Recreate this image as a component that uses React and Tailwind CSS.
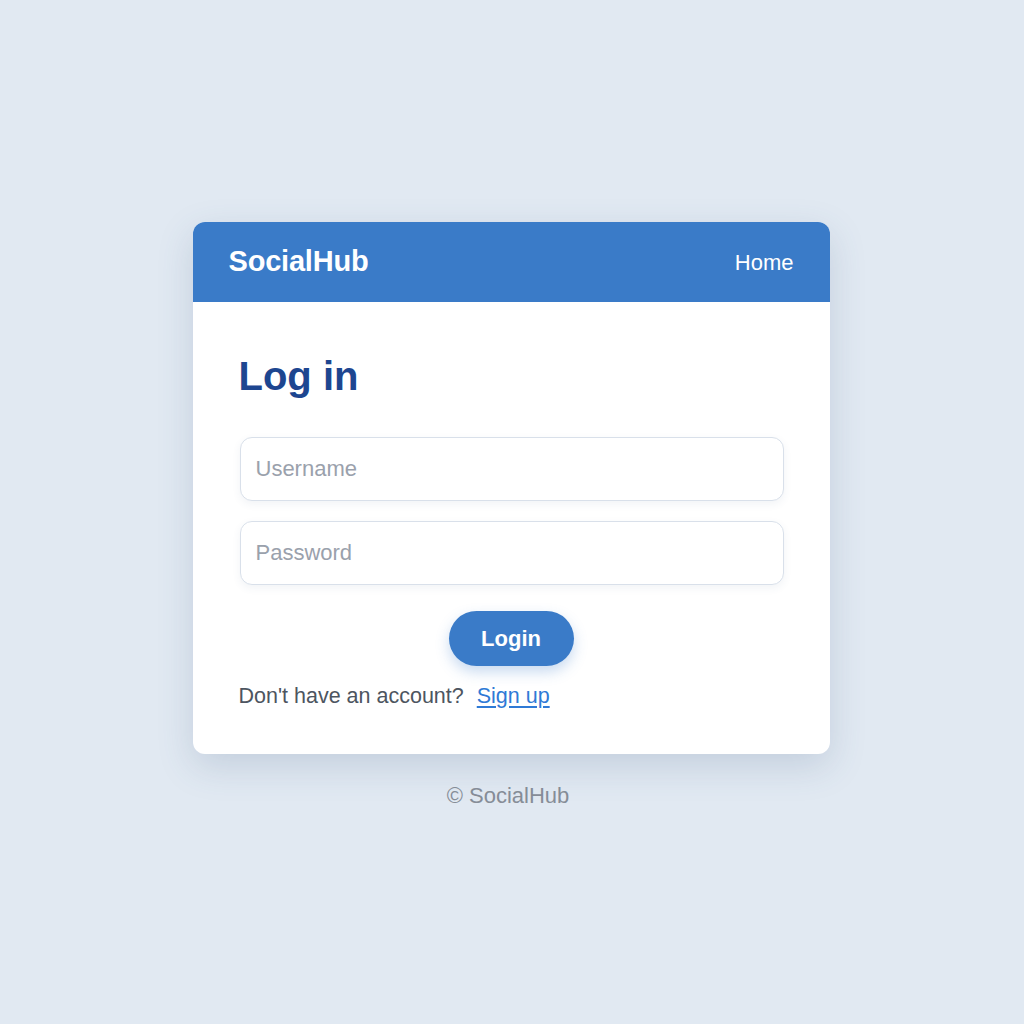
export default function App() {
  return (
    <div
      className="min-h-screen w-full bg-[#e1e9f2] flex flex-col items-center pt-[222px]"
      style={{ fontFamily: '"Liberation Sans", Arial, sans-serif' }}
    >
      <div className="w-[637px] -translate-x-[1px] bg-white rounded-[12px] overflow-hidden shadow-[0_12px_36px_rgba(60,90,130,0.18)]">
        <div className="h-[80px] bg-[#3a7bc8] flex items-center justify-between pl-[36px] pr-[36px]">
          <span className="text-white font-bold text-[29px] tracking-[-0.2px]">SocialHub</span>
          <span className="text-white text-[22px]">Home</span>
        </div>
        <div className="px-[46px] pt-[50px] pb-[44px]">
          <h1 className="text-[40px] leading-[48px] font-bold text-[#1d4690]">Log in</h1>
          <div className="mt-[37px] flex flex-col gap-[20px] pl-[1px]">
            <input
              placeholder="Username"
              className="h-[64px] w-full rounded-[12px] border border-[#d9e0ea] bg-white px-[15px] text-[22px] text-gray-700 placeholder:text-[#9aa1ac] shadow-[0_3px_8px_rgba(60,90,130,0.07)] outline-none"
              style={{ fontFamily: '"Liberation Sans", Arial, sans-serif' }}
            />
            <input
              placeholder="Password"
              type="password"
              className="h-[64px] w-full rounded-[12px] border border-[#d9e0ea] bg-white px-[15px] text-[22px] text-gray-700 placeholder:text-[#9aa1ac] shadow-[0_3px_8px_rgba(60,90,130,0.07)] outline-none"
              style={{ fontFamily: '"Liberation Sans", Arial, sans-serif' }}
            />
          </div>
          <div className="mt-[26px] flex justify-center">
            <button className="w-[125px] h-[55px] rounded-full bg-[#3a7bc8] text-white font-bold text-[22px] shadow-[0_6px_14px_rgba(58,123,200,0.28)]">
              Login
            </button>
          </div>
          <p className="mt-[16px] text-[21.5px] leading-[28px] text-[#4d5560]">
            Don't have an account?
            <a href="#" className="ml-[13px] text-[#2f7ad6] underline underline-offset-[3px]">Sign up</a>
          </p>
        </div>
      </div>
      <div className="mt-[28px] pr-[8px] text-[22px] leading-[28px] text-[#878e98]">© SocialHub</div>
    </div>
  );
}
